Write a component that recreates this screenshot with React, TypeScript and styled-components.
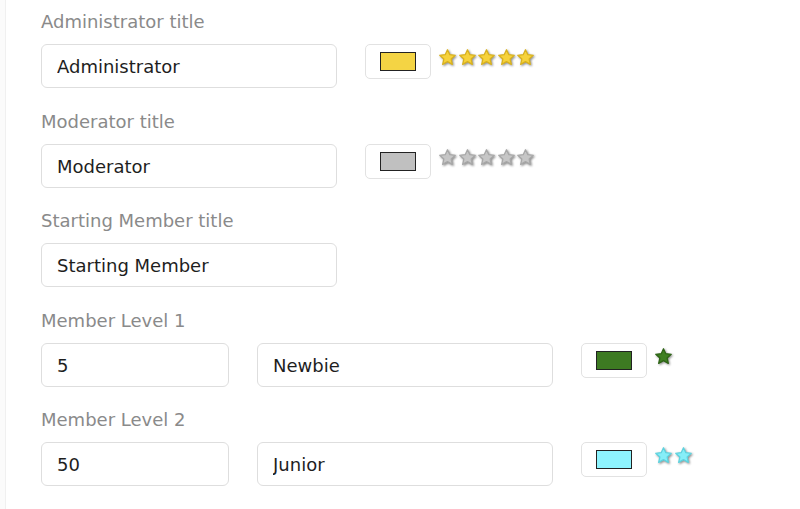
import React from "react";
import styled, { createGlobalStyle } from "styled-components";

const Global = createGlobalStyle`
  html, body { margin: 0; padding: 0; background: #ffffff; }
  body { font-family: "DejaVu Sans", Verdana, sans-serif; }
`;

const Page = styled.div`
  width: 800px;
  height: 509px;
  box-sizing: border-box;
  background: #fbfbfb;
  padding-left: 5px;
  overflow: hidden;
`;

const Panel = styled.div`
  height: 100%;
  box-sizing: border-box;
  background: #ffffff;
  border-left: 1px solid #f0f0f0;
  padding: 9px 0 0 35px;
  display: flex;
  flex-direction: column;
  gap: 20.5px;
`;

const Group = styled.div`
  display: flex;
  flex-direction: column;
`;

const Label = styled.div`
  font-size: 18px;
  line-height: 26px;
  color: #8a8a8a;
  margin-bottom: 9px;
`;

const Row = styled.div`
  display: flex;
  align-items: flex-start;
  gap: 28px;
`;

const TextInput = styled.input<{ $w: number }>`
  box-sizing: border-box;
  width: ${(p) => p.$w}px;
  height: 44px;
  border: 1px solid #dedede;
  border-radius: 6px;
  padding: 1px 15px 0;
  font-family: "DejaVu Sans", Verdana, sans-serif;
  font-size: 18px;
  color: #1e1e1e;
  background: #fff;
  outline: none;
`;

const ColorGroup = styled.div`
  display: flex;
  align-items: flex-start;
  gap: 7px;
`;

const ColorBox = styled.div`
  box-sizing: border-box;
  width: 66px;
  height: 35px;
  border: 1px solid #e2e2e2;
  border-radius: 5px;
  display: flex;
  align-items: center;
  justify-content: center;
  background: #fff;
`;

const Swatch = styled.div<{ $c: string }>`
  box-sizing: border-box;
  width: 36px;
  height: 19px;
  border: 1px solid #222;
  background: ${(p) => p.$c};
`;

const Stars = styled.div`
  display: flex;
  gap: 0.5px;
  padding-top: 4px;
`;

const StarSvg = styled.svg`
  width: 19px;
  height: 19px;
  filter: drop-shadow(1.5px 1.5px 1px rgba(0, 0, 0, 0.45));
`;

function Star({ fill, stroke }: { fill: string; stroke: string }) {
  return (
    <StarSvg viewBox="0 0 24 24">
      <path
        d="M12 2.2l2.9 6.3 6.9.7-5.2 4.7 1.5 6.8L12 17.2l-6.1 3.5 1.5-6.8-5.2-4.7 6.9-.7z"
        fill={fill}
        stroke={stroke}
        strokeWidth={1.6}
        strokeLinejoin="round"
      />
    </StarSvg>
  );
}

function StarRating({ n, fill, stroke }: { n: number; fill: string; stroke: string }) {
  return (
    <Stars>
      {Array.from({ length: n }).map((_, i) => (
        <Star key={i} fill={fill} stroke={stroke} />
      ))}
    </Stars>
  );
}

function Color({ c, n, fill, stroke }: { c: string; n: number; fill: string; stroke: string }) {
  return (
    <ColorGroup>
      <ColorBox>
        <Swatch $c={c} />
      </ColorBox>
      <StarRating n={n} fill={fill} stroke={stroke} />
    </ColorGroup>
  );
}

export default function App() {
  return (
    <>
      <Global />
      <Page>
        <Panel>
          <Group>
            <Label>Administrator title</Label>
            <Row>
              <TextInput $w={296} defaultValue="Administrator" />
              <Color c="#f4d444" n={5} fill="#f6d23c" stroke="#d9b21e" />
            </Row>
          </Group>
          <Group>
            <Label>Moderator title</Label>
            <Row>
              <TextInput $w={296} defaultValue="Moderator" />
              <Color c="#c0c0c0" n={5} fill="#c6c6c6" stroke="#a8a8a8" />
            </Row>
          </Group>
          <Group>
            <Label>Starting Member title</Label>
            <Row>
              <TextInput $w={296} defaultValue="Starting Member" />
            </Row>
          </Group>
          <Group>
            <Label>Member Level 1</Label>
            <Row>
              <TextInput $w={188} defaultValue="5" />
              <TextInput $w={296} defaultValue="Newbie" />
              <Color c="#3d7a22" n={1} fill="#3f7f22" stroke="#2e6416" />
            </Row>
          </Group>
          <Group>
            <Label>Member Level 2</Label>
            <Row>
              <TextInput $w={188} defaultValue="50" />
              <TextInput $w={296} defaultValue="Junior" />
              <Color c="#8ef4fe" n={2} fill="#86eef8" stroke="#5fd3df" />
            </Row>
          </Group>
        </Panel>
      </Page>
    </>
  );
}
